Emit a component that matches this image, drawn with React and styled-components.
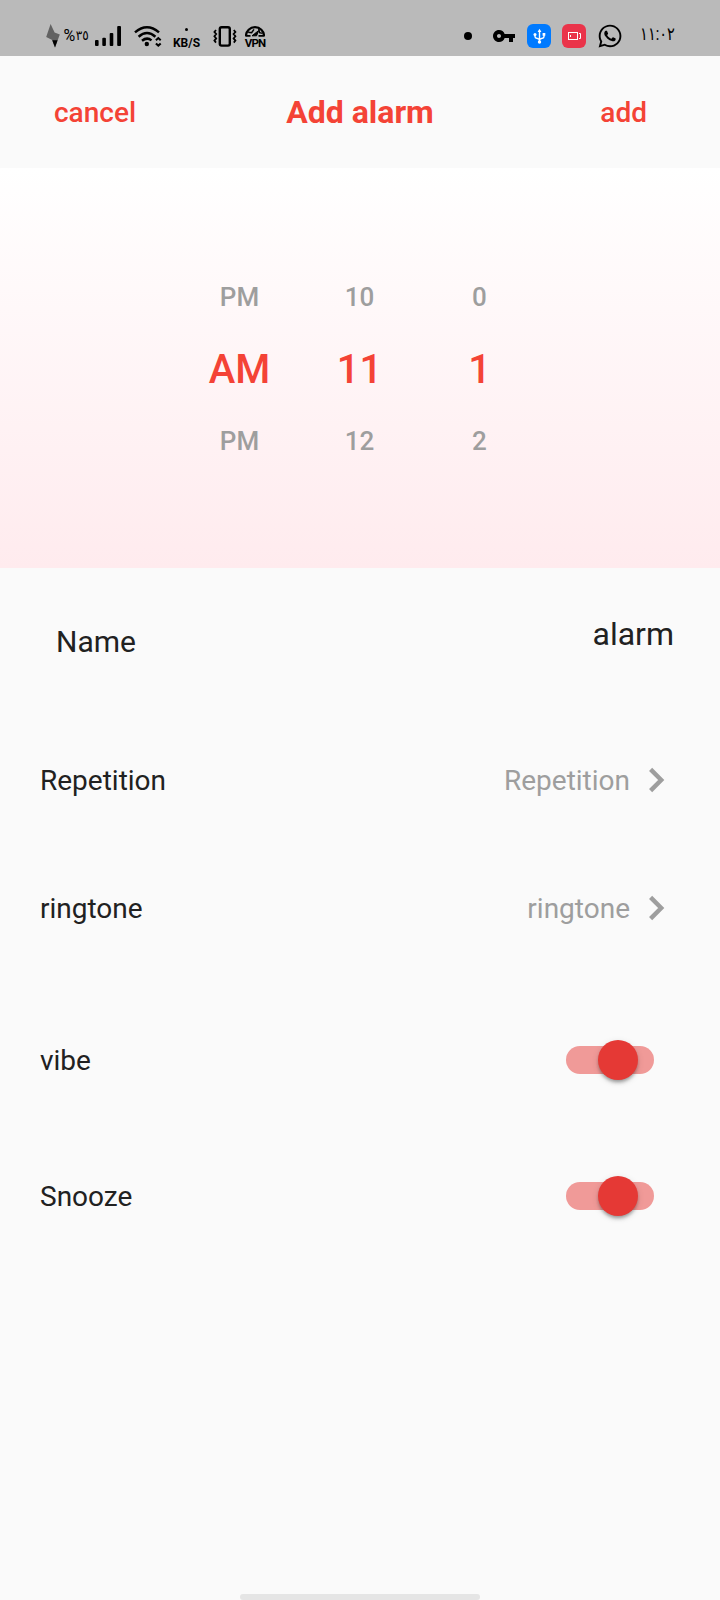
import React from "react";
import styled, { createGlobalStyle } from "styled-components";
import { MdVpnKey } from "react-icons/md";
import { FaWhatsapp } from "react-icons/fa";

const GlobalStyle = createGlobalStyle`
  * { box-sizing: border-box; }
  html, body { margin: 0; padding: 0; background: #fafafa; }
  body { font-family: Roboto, "Liberation Sans", sans-serif; color: #212121; overflow: hidden; }
  svg { display: block; flex: none; }
`;

const Screen = styled.div`
  width: 720px;
  height: 1600px;
  display: flex;
  flex-direction: column;
  background: #fafafa;
  overflow: hidden;
`;

const StatusBar = styled.div`
  height: 56px;
  flex: none;
  display: flex;
  justify-content: space-between;
  padding: 16px 45px 0 45px;
  background: #bababa;
  color: #000;
`;

const StatusGroup = styled.div`
  height: 40px;
  display: flex;
  align-items: center;
`;

const Slot = styled.div`
  width: ${(p) => p.$w}px;
  height: 40px;
  flex: none;
  display: flex;
  align-items: center;
  justify-content: center;
`;

const Digits = styled.span`
  direction: ltr;
  unicode-bidi: isolate;
  white-space: nowrap;
  font-family: Roboto, "DejaVu Sans", sans-serif;
  font-size: ${(p) => p.$size}px;
  padding-bottom: ${(p) => p.$lift || 0}px;
  line-height: 20px;
  transform: scaleX(${(p) => p.$stretch || 1});
`;

const Speed = styled.div`
  display: flex;
  flex-direction: column;
  align-items: center;
  font-size: 12px;
  font-weight: 700;
  line-height: 12px;
  padding-top: 2px;
  white-space: nowrap;
`;

const SpeedDot = styled.span`
  width: 3px;
  height: 3px;
  border-radius: 50%;
  background: #000;
  margin: 2px 0 6px;
`;

const Vpn = styled.div`
  display: flex;
  flex-direction: column;
  align-items: center;
  gap: 1px;
  padding-top: 2px;
  font-size: 11.5px;
  font-weight: 700;
  letter-spacing: -0.9px;
  line-height: 11px;
`;

const AppBadge = styled.div`
  width: 24px;
  height: 24px;
  flex: none;
  border-radius: 6px;
  background: ${(p) => p.$color};
`;

const Header = styled.header`
  height: 112px;
  flex: none;
  display: grid;
  grid-template-columns: 1fr auto 1fr;
  align-items: center;
  padding: 0 73px 0 54px;
  color: #f44336;
`;

const HeaderAction = styled.button`
  border: 0;
  padding: 2px 0 0;
  background: none;
  color: inherit;
  font: 500 28px/40px Roboto, sans-serif;
  justify-self: ${(p) => p.$side};
`;

const Title = styled.h1`
  margin: 0 0 0 19px;
  font-size: 32px;
  font-weight: 700;
  line-height: 40px;
`;

const Picker = styled.section`
  height: 400px;
  flex: none;
  display: flex;
  justify-content: center;
  align-items: center;
  padding: 2px 1px 0 0;
  background: linear-gradient(#ffffff, #ffebee);
`;

const Wheel = styled.div`
  width: 120px;
  display: flex;
  flex-direction: column;
`;

const WheelItem = styled.div`
  height: 72px;
  padding-top: ${(p) => (p.$active ? 1 : 0)}px;
  line-height: 72px;
  text-align: center;
  font-weight: 500;
  font-size: ${(p) => (p.$active ? 40 : 26)}px;
  color: ${(p) => (p.$active ? "#f44336" : "#9e9e9e")};
`;

const NameRow = styled.div`
  height: 148px;
  flex: none;
  display: flex;
  align-items: center;
  justify-content: space-between;
  padding: 0 46px 0 56px;
`;

const NameLabel = styled.span`
  font-size: 30px;
  line-height: 40px;
`;

const NameValue = styled.span`
  font-size: 32px;
  line-height: 40px;
  margin-bottom: 17px;
`;

const Option = styled.div`
  height: ${(p) => p.$h}px;
  flex: none;
  display: flex;
  align-items: center;
  justify-content: space-between;
  padding: 0 40px;
`;

const OptionText = styled.span`
  padding-top: 2px;
  font-size: 28px;
  line-height: 40px;
`;

const OptionValue = styled.div`
  display: flex;
  align-items: center;
  gap: 2px;
  color: #9e9e9e;
`;

const Toggles = styled.div`
  padding-top: 20px;
  flex: 1;
`;

const Track = styled.div`
  width: 88px;
  height: 28px;
  margin-right: 26px;
  padding-left: 32px;
  display: flex;
  align-items: center;
  border-radius: 14px;
  background: #f09a98;
`;

const Thumb = styled.div`
  width: 40px;
  height: 40px;
  flex: none;
  border-radius: 50%;
  background: #e53935;
  box-shadow: 0 4px 4px -2px rgba(0, 0, 0, 0.24), 0 2px 3px rgba(0, 0, 0, 0.14), 0 2px 7px rgba(0, 0, 0, 0.12);
`;

const HomeBar = styled.div`
  width: 240px;
  height: 6px;
  flex: none;
  align-self: center;
  border-radius: 3px;
  background: #e5e5e5;
`;

const Chevron = () => (
  <svg width="48" height="48" viewBox="0 0 24 24" fill="none" stroke="currentColor" strokeWidth="2.2">
    <path d="M9.3 6.7L14.6 12L9.3 17.3" />
  </svg>
);

const Bolt = () => (
  <svg width="14" height="24" viewBox="0 0 14 24">
    <path d="M4.6 0L8.6 8.4L13.8 10.4L9 23.5L6.2 16L0.2 13Z" fill="#626262" />
    <path d="M6.2 16.2H11.6L9 23.5Z" fill="#000" />
  </svg>
);

const Signal = () => (
  <svg width="26" height="20" viewBox="0 0 26 20">
    <g fill="#000">
      <rect x="0" y="14" width="3.6" height="6" rx="1" />
      <rect x="7.3" y="11.8" width="3.6" height="8.2" rx="1" />
      <rect x="14.7" y="7" width="3.6" height="13" rx="1" />
      <rect x="22.2" y="0" width="3.8" height="20" rx="1" />
    </g>
  </svg>
);

const Wifi = () => (
  <svg width="28" height="21" viewBox="0 0 28 21" fill="none" stroke="#000" strokeWidth="2.5">
    <path d="M1 6.4Q13 -3.8 25 6.4M4.6 10.7Q13 3.4 21.4 10.7M8 14.8Q13 10.7 17.5 14.4" />
    <circle cx="12.8" cy="18" r="2.2" fill="#000" stroke="none" />
    <path d="M21.9 14.2L24.3 12L26.7 14.2M21.9 17.4L24.3 19.6L26.7 17.4" strokeWidth="2" />
  </svg>
);

const Vibrate = () => (
  <svg width="24" height="21" viewBox="0 0 24 21" fill="none" stroke="#000">
    <rect x="6.8" y="1.2" width="10" height="18.4" rx="1.8" strokeWidth="2.4" />
    <path d="M3 4L1.4 6L3.2 8L1.4 10.2L3.2 12.4L1.4 14.6L3 16.6M20.8 4L22.4 6L20.6 8L22.4 10.2L20.6 12.4L22.4 14.6L20.8 16.6" strokeWidth="1.8" />
  </svg>
);

const Gauge = () => (
  <svg width="20" height="11" viewBox="0 0 20 11" fill="none" stroke="#000">
    <path d="M1 10A9 8.8 0 0 1 19 10" strokeWidth="2.2" />
    <path d="M3.2 6.2L6.6 6.8L9 3.4M13.6 2.4L14.6 6.6L17.6 7.4" strokeWidth="1.5" />
    <path d="M7 9.8L13.6 4.6L11.6 9.8Z" fill="#000" strokeWidth="1" />
    <path d="M0.4 9.9H5.5M13.5 9.9H19.6" strokeWidth="1.6" />
  </svg>
);

const Usb = () => (
  <svg width="24" height="24" viewBox="0 0 24 24" fill="none" stroke="#fff" strokeWidth="1.4">
    <path d="M12.5 6.5V18M8 10V12.5Q8 14 9.7 14.2L12.5 15.5L15.3 14.2Q17 14 17 12.5V10" />
    <path d="M10.6 8L12.5 4.8L14.4 8Z" fill="#fff" stroke="none" />
    <circle cx="12.5" cy="18" r="1.7" fill="#fff" stroke="none" />
    <circle cx="8" cy="10.5" r="1.5" fill="#fff" stroke="none" />
    <rect x="15.6" y="9" width="2.7" height="2.7" fill="#fff" stroke="none" />
  </svg>
);

const Recorder = () => (
  <svg width="24" height="24" viewBox="0 0 24 24" fill="none" stroke="#fff" strokeWidth="1">
    <rect x="6.5" y="8.5" width="9" height="7" />
    <path d="M17 9.5H18.5V14.5H17" />
    <rect x="8" y="11" width="1" height="2" fill="#fff" stroke="none" />
  </svg>
);

const Bullet = () => (
  <svg width="8" height="8" viewBox="0 0 8 8">
    <circle cx="4" cy="4" r="4" />
  </svg>
);

const options = ["Repetition", "ringtone"];
const toggles = ["vibe", "Snooze"];
const wheels = [
  ["PM", "AM", "PM"],
  ["10", "11", "12"],
  ["0", "1", "2"],
];

export default function App() {
  return (
    <Screen>
      <GlobalStyle />
      <StatusBar>
        <StatusGroup>
          <Slot $w={15}><Bolt /></Slot>
          <Slot $w={33}>
            <Digits $size={16}>%</Digits>
            <Digits $size={13.5} $lift={3} $stretch={0.9}>٣٥</Digits>
          </Slot>
          <Slot $w={30}><Signal /></Slot>
          <Slot $w={50}><Wifi /></Slot>
          <Slot $w={27}><Speed><SpeedDot />KB/S</Speed></Slot>
          <Slot $w={49}><Vibrate /></Slot>
          <Slot $w={12}><Vpn><Gauge />VPN</Vpn></Slot>
        </StatusGroup>
        <StatusGroup>
          <Slot $w={8}><Bullet /></Slot>
          <Slot $w={64}><MdVpnKey size={24} /></Slot>
          <Slot $w={6}><AppBadge $color="#007aff"><Usb /></AppBadge></Slot>
          <Slot $w={64}><AppBadge $color="#ea344a"><Recorder /></AppBadge></Slot>
          <Slot $w={7}><FaWhatsapp size={26} /></Slot>
          <Slot $w={27} />
          <Slot $w={35}><Digits $size={18} $lift={4} $stretch={0.81}>١١:٠٢</Digits></Slot>
        </StatusGroup>
      </StatusBar>
      <Header>
        <HeaderAction $side="start">cancel</HeaderAction>
        <Title>Add alarm</Title>
        <HeaderAction $side="end">add</HeaderAction>
      </Header>
      <Picker>
        {wheels.map((wheel, w) => (
          <Wheel key={w}>
            {wheel.map((item, i) => (
              <WheelItem key={i} $active={i === 1}>{item}</WheelItem>
            ))}
          </Wheel>
        ))}
      </Picker>
      <NameRow>
        <NameLabel>Name</NameLabel>
        <NameValue>alarm</NameValue>
      </NameRow>
      {options.map((label) => (
        <Option key={label} $h={128}>
          <OptionText>{label}</OptionText>
          <OptionValue>
            <OptionText>{label}</OptionText>
            <Chevron />
          </OptionValue>
        </Option>
      ))}
      <Toggles>
        {toggles.map((label) => (
          <Option key={label} $h={136}>
            <OptionText>{label}</OptionText>
            <Track><Thumb /></Track>
          </Option>
        ))}
      </Toggles>
      <HomeBar />
    </Screen>
  );
}
